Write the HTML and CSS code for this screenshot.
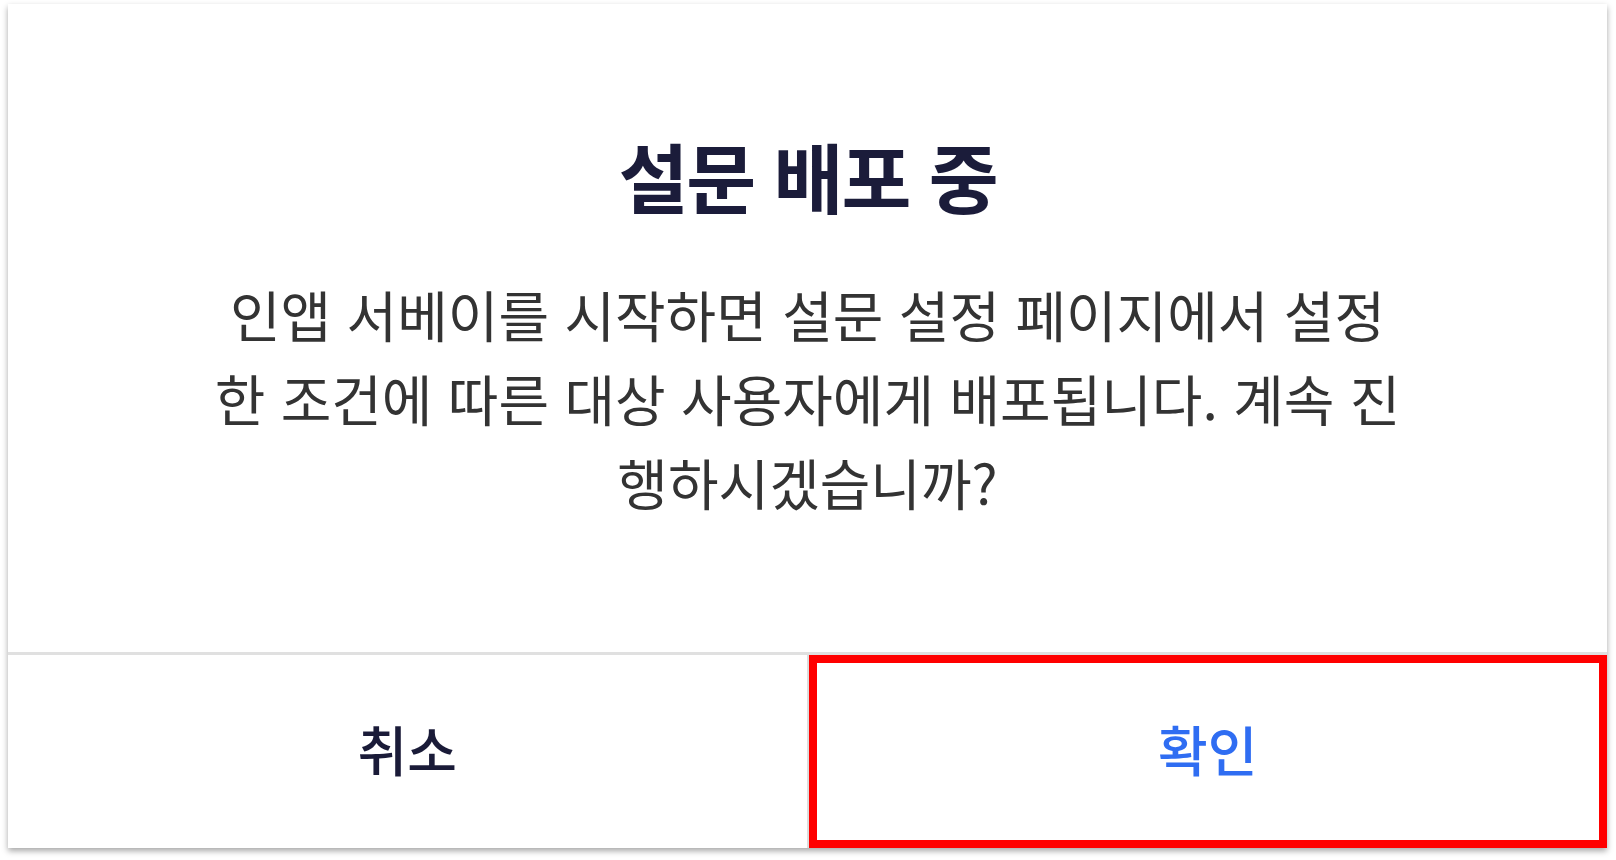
FILE: index.html
```html
<!DOCTYPE html>
<html lang="ko">
<head>
  <meta charset="UTF-8" />
  <meta name="viewport" content="width=device-width, initial-scale=1.0"/>
  <title>설문 배포 중</title>
  <link rel="stylesheet" href="styles.css">
</head>
<body>
  <div class="dialog">
    <div class="dialog-body">
      <h1 class="dialog-title">설문 배포 중</h1>
      <p class="dialog-text">
        인앱 서베이를 시작하면 설문 설정 페이지에서 설정<br>
        한 조건에 따른 대상 사용자에게 배포됩니다. 계속 진<br>
        행하시겠습니까?
      </p>
    </div>
    <div class="dialog-actions">
      <button type="button" class="btn btn-cancel">취소</button>
      <button type="button" class="btn btn-confirm">확인</button>
    </div>
  </div>
</body>
</html>
```

FILE: styles.css
```css
* { margin: 0; padding: 0; box-sizing: border-box; }
html, body { height: 100%; }

body {
  background: #ffffff;
  padding: 4px 9px 12px 8px;
  font-family: "Noto Sans CJK KR", "Noto Sans", sans-serif;
}

.dialog {
  background: #ffffff;
  height: 844px;
  display: flex; flex-direction: column;
  box-shadow: 0 3px 6px rgba(0, 0, 0, 0.35);
}

.dialog-body {
  height: 648px;
  padding-top: 126px;
  text-align: center;
}

.dialog-title {
  font-size: 76px; line-height: 90px;
  font-weight: 700; color: #1b1c3a;
  letter-spacing: -2px;
}

.dialog-text {
  margin-top: 51px;
  font-size: 55px; line-height: 84px;
  font-weight: 400; color: #333333;
}

.dialog-actions {
  flex: 1;
  display: flex;
  border-top: 3px solid #e0e0e0;
}

.btn {
  flex: 1;
  background: #ffffff; border: none;
  padding-bottom: 6px;
  font-family: inherit;
  font-size: 54px; font-weight: 500;
  cursor: pointer;
}

.btn-cancel { color: #1a1b38; border-right: 2px solid #dddddd; }
.btn-confirm {
  color: #2f6df2;
  outline: 8px solid #ff0000; outline-offset: -8px;
}
```
